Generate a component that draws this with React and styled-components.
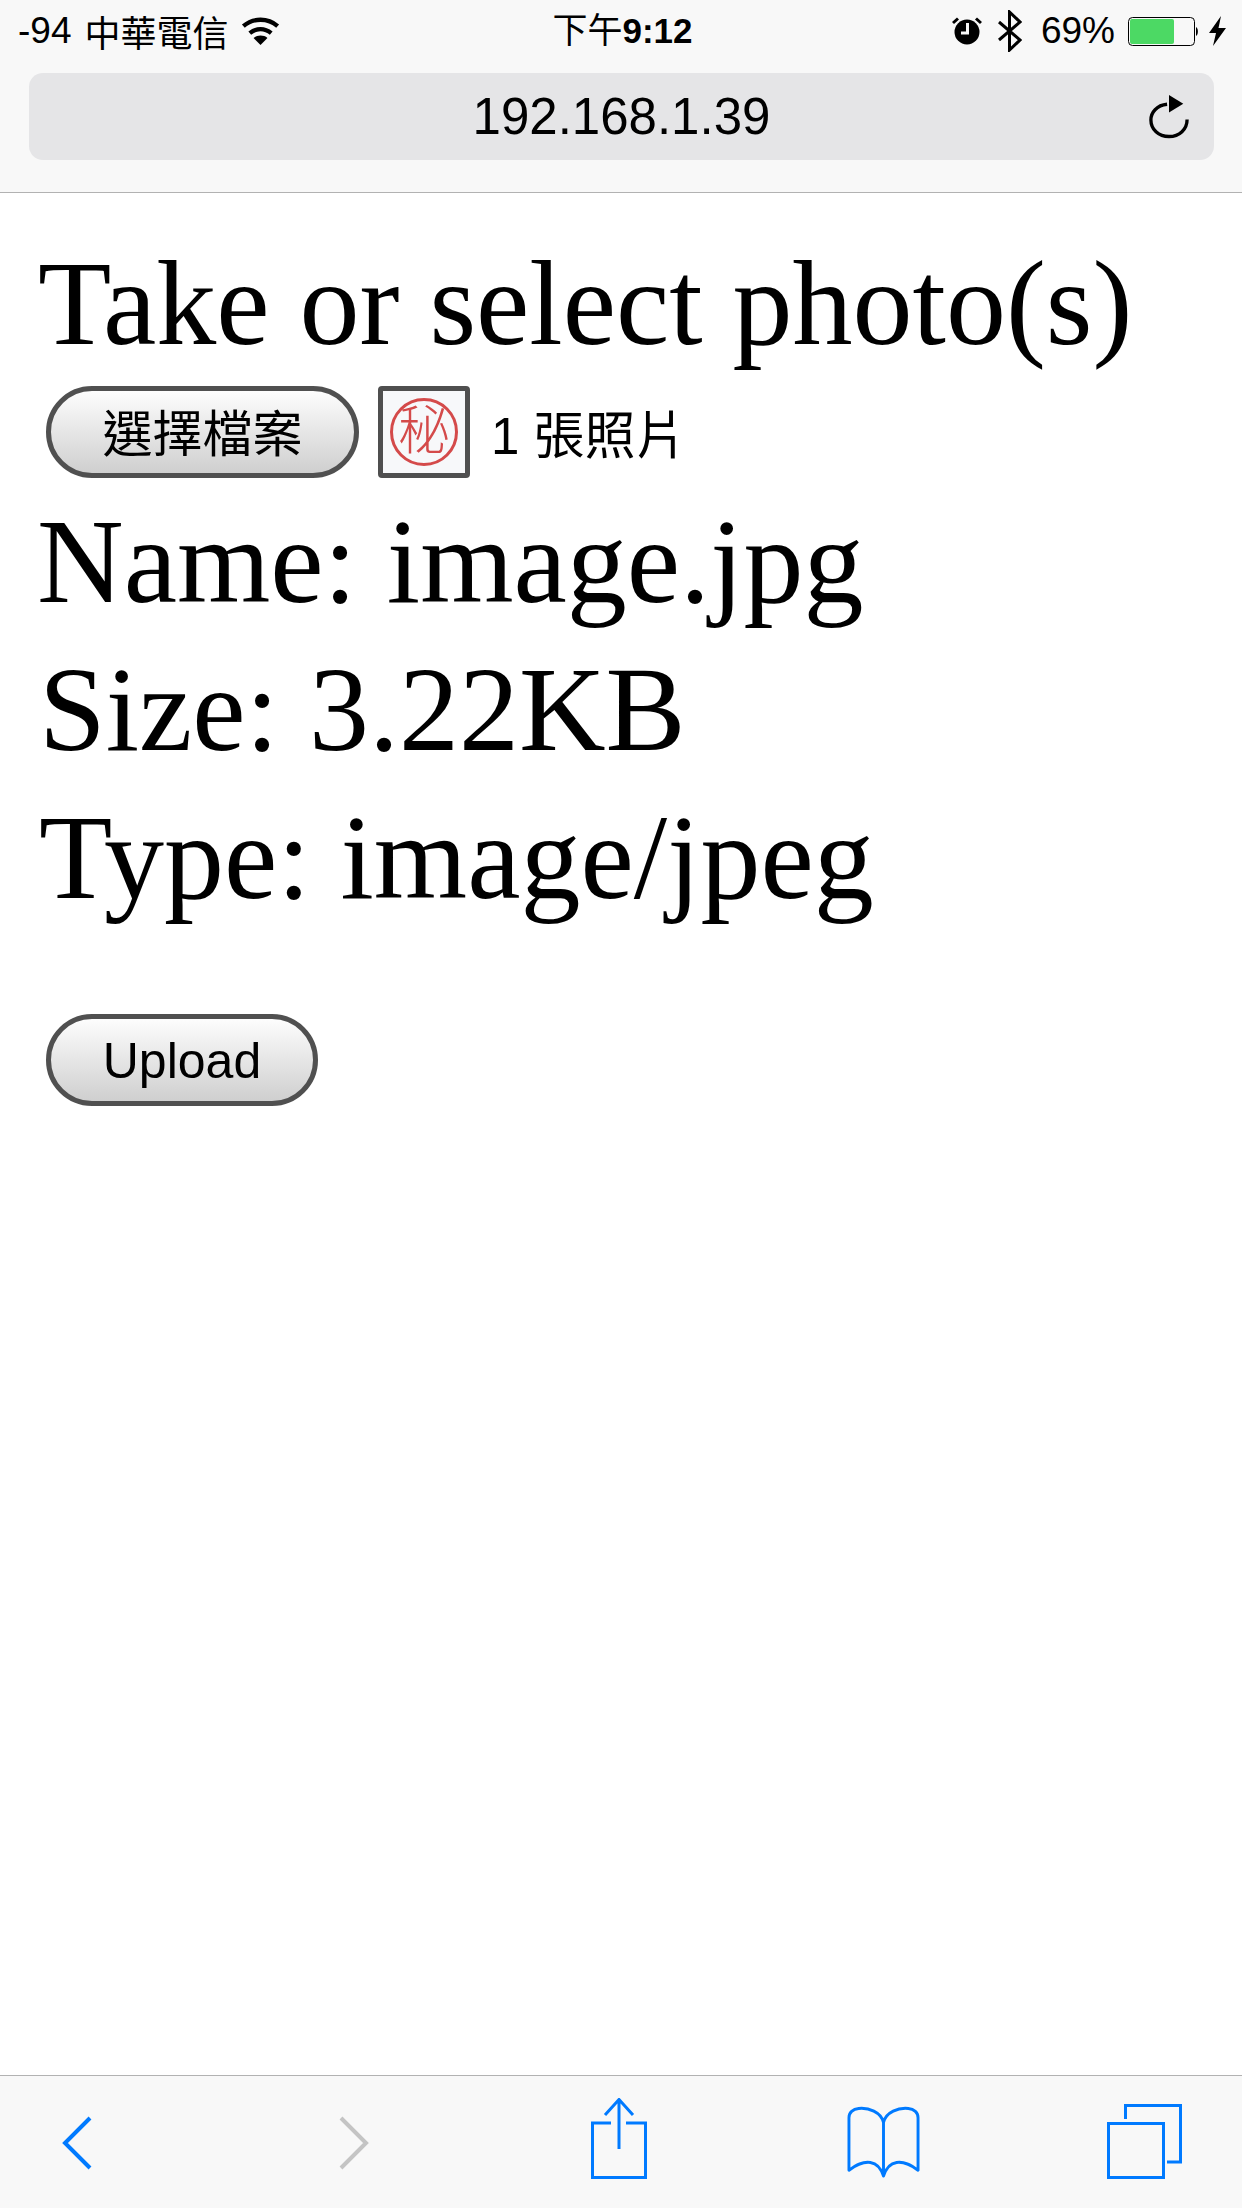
import React from 'react'
import styled, { createGlobalStyle } from 'styled-components'

const SANS = `"Liberation Sans", "Noto Sans CJK TC", sans-serif`
const SERIF = `"Liberation Serif", "Noto Serif CJK TC", serif`
const BLUE = '#007aff'

const Global = createGlobalStyle`
html, body { margin: 0; padding: 0; background: #fff; }
`

const Page = styled.div`
width: 1242px;
height: 2208px;
display: flex;
flex-direction: column;
overflow: hidden;
font-family: ${SANS};
color: #000;
`
const TopBar = styled.header`
height: 193px;
box-sizing: border-box;
background: #f8f8f8;
border-bottom: 1px solid #b2b2b2;
`
const StatusBar = styled.div`
height: 73px;
padding: 0 15px 0 18px;
box-sizing: border-box;
display: grid;
grid-template-columns: 1fr auto 1fr;
align-items: start;
font-size: 37px;
`
const StatusLeft = styled.div`
display: flex;
align-items: center;
height: 62px;
`
const StatusRight = styled(StatusLeft)`
justify-content: flex-end;
`
const Carrier = styled.span`
margin-left: 13px;
font-size: 36px;
`
const Clock = styled.span`
font-size: 35px;
line-height: 60px;
margin-top: 1px;
b { font-weight: 700; }
`
const Percent = styled.span`
margin: 0 13px 0 19px;
`
const UrlBar = styled.div`
height: 87px;
margin: 0 28px 0 29px;
border-radius: 14px;
background: #e5e5e7;
display: flex;
align-items: center;
justify-content: center;
position: relative;
font-size: 51px;
`
const Reload = styled.svg`
position: absolute;
right: 25px;
top: 21px;
`
const Main = styled.main`
flex: 1;
padding: 42px 0 0 38px;
font-family: ${SERIF};
`
const Title = styled.h1`
margin: 0 0 13px;
font-size: 120px;
line-height: 138px;
font-weight: 400;
`
const PickRow = styled.div`
display: flex;
align-items: center;
margin: 0 0 0 8px;
font-family: ${SANS};
`
const PillButton = styled.button`
width: ${(p) => p.$w}px;
height: 92px;
padding: ${(p) => p.$pad};
box-sizing: border-box;
border: 5px solid #505050;
border-radius: 46px;
background: linear-gradient(#fdfdfd, #cfcfcf);
color: #000;
font-family: ${SANS};
font-size: 50px;
`
const Thumb = styled.div`
width: 92px;
height: 92px;
margin-left: 19px;
box-sizing: border-box;
border: 5px solid #4f4f4f;
border-radius: 4px;
background: #f7f8fa;
display: flex;
align-items: center;
justify-content: center;
`
const Stamp = styled.div`
width: 68px;
height: 68px;
box-sizing: border-box;
border: 3px solid #d44a4a;
border-radius: 50%;
color: #d44a4a;
font-size: 52px;
font-weight: 300;
line-height: 60px;
text-align: center;
`
const Count = styled.span`
margin-left: 21px;
font-size: 51px;
`
const Info = styled.div`
margin: 10px 0 0 -1px;
font-size: 120px;
line-height: 148px;
`
const InfoLine = styled.div`
margin-left: ${(p) => p.$x || 0}px;
`
const UploadRow = styled.div`
margin: 82px 0 0 8px;
`
const BottomBar = styled.footer`
height: 133px;
box-sizing: border-box;
background: #f8f8f8;
border-top: 1px solid #b2b2b2;
display: flex;
align-items: flex-start;
`
const ToolIcon = styled.svg`
flex: none;
margin-left: ${(p) => p.$x}px;
margin-top: ${(p) => p.$y}px;
`

const Wifi = () => (
  <svg width="39" height="30" viewBox="0 0 36 28" style={{ marginLeft: 12 }} fill="none" stroke="#000" strokeWidth="4">
    <path d="M2 9.500C11 1.500 25 1.500 34 9.500" />
    <path d="M8 16C14 11 22 11 28 16" />
    <path d="M18 27L11.500 20.500C15 17.500 21 17.500 24.500 20.500Z" fill="#000" stroke="none" />
  </svg>
)

const Alarm = () => (
  <svg width="30" height="28" viewBox="0 0 30 28">
    <circle cx="15" cy="15" r="12.500" fill="#000" />
    <path d="M1 6L6 1.500M29 6L24 1.500" stroke="#000" strokeWidth="3" />
    <path d="M15.500 6V16H9" fill="none" stroke="#f8f8f8" strokeWidth="3" />
  </svg>
)

const Bluetooth = () => (
  <svg width="24" height="42" viewBox="0 0 24 42" style={{ marginLeft: 16 }} fill="none" stroke="#000" strokeWidth="3">
    <path d="M1 12L22 30L11.500 40V2L22 12L1 30" />
  </svg>
)

const Battery = () => (
  <svg width="71" height="29" viewBox="0 0 71 29">
    <rect x="0.500" y="0.500" width="66" height="28" rx="4" fill="none" stroke="#000" />
    <rect x="2" y="2" width="44" height="25" rx="2" fill="#4cd964" />
    <path d="M68 10C70.500 11 70.500 18 68 19Z" fill="#000" />
  </svg>
)

const Bolt = () => (
  <svg width="18" height="30" viewBox="0 0 18 30" style={{ marginLeft: 10 }}>
    <path d="M12 0L0 17H7L4 30L17 12H9.500Z" fill="#000" />
  </svg>
)

export default function App() {
  return (
    <Page>
      <Global />
      <TopBar>
        <StatusBar>
          <StatusLeft>
            <span>-94</span>
            <Carrier>中華電信</Carrier>
            <Wifi />
          </StatusLeft>
          <Clock>下午<b>9:12</b></Clock>
          <StatusRight>
            <Alarm />
            <Bluetooth />
            <Percent>69%</Percent>
            <Battery />
            <Bolt />
          </StatusRight>
        </StatusBar>
        <UrlBar>
          192.168.1.39
          <Reload width="40" height="45" viewBox="0 0 42 46" preserveAspectRatio="none" fill="none">
            <path d="M19 10.500C8 11.500 2 19 2 26.500C2 36 10 43.500 21 43.500C32 43.500 40 36 40 26" stroke="#000" strokeWidth="3.500" />
            <path d="M21 1L36 10L21 19Z" fill="#000" />
          </Reload>
        </UrlBar>
      </TopBar>
      <Main>
        <Title>Take or select photo(s)</Title>
        <PickRow>
          <PillButton $w={313} $pad="0 0 4px">選擇檔案</PillButton>
          <Thumb><Stamp>秘</Stamp></Thumb>
          <Count>1 張照片</Count>
        </PickRow>
        <Info>
          <InfoLine>Name: image.jpg</InfoLine>
          <InfoLine $x={2}>Size: 3.22KB</InfoLine>
          <InfoLine $x={2}>Type: image/jpeg</InfoLine>
        </Info>
        <UploadRow>
          <PillButton $w={272} $pad="2px 0 0">Upload</PillButton>
        </UploadRow>
      </Main>
      <BottomBar>
        <ToolIcon $x={62} $y={40} width="30" height="54" viewBox="0 0 30 54" fill="none">
          <path d="M28 2L3 27L28 52" stroke={BLUE} strokeWidth="4" />
        </ToolIcon>
        <ToolIcon $x={247} $y={40} width="30" height="54" viewBox="0 0 30 54" fill="none">
          <path d="M2 2L27 27L2 52" stroke="#c4c4c4" strokeWidth="4" />
        </ToolIcon>
        <ToolIcon $x={222} $y={22} width="56" height="81" viewBox="0 0 56 81" fill="none" stroke={BLUE} strokeWidth="3">
          <path d="M20 25H1.500V79.500H54.500V25H35" />
          <path d="M28 51V2M14 17L28 1.500L42 17" />
        </ToolIcon>
        <ToolIcon $x={199} $y={30} width="75" height="72" viewBox="0 0 75 74" fill="none" stroke={BLUE} strokeWidth="3" strokeLinejoin="round" strokeLinecap="round">
          <path d="M37.500 70V17C35 6 22 1.500 12 2.500C6 3 2 7 2 12V66C10 60 16 57 24 58C31 59 35 64 37.500 72C40 64 44 59 51 58C59 57 65 60 73 66V12C73 7 69 3 63 2.500C53 1.500 40 6 37.500 17" />
        </ToolIcon>
        <ToolIcon $x={186} $y={28} width="75" height="75" viewBox="0 0 75 75" fill="none" stroke={BLUE} strokeWidth="3">
          <rect x="1.500" y="19.500" width="55" height="54" />
          <path d="M18.500 15V1.500H73.500V58H60" />
        </ToolIcon>
      </BottomBar>
    </Page>
  )
}
